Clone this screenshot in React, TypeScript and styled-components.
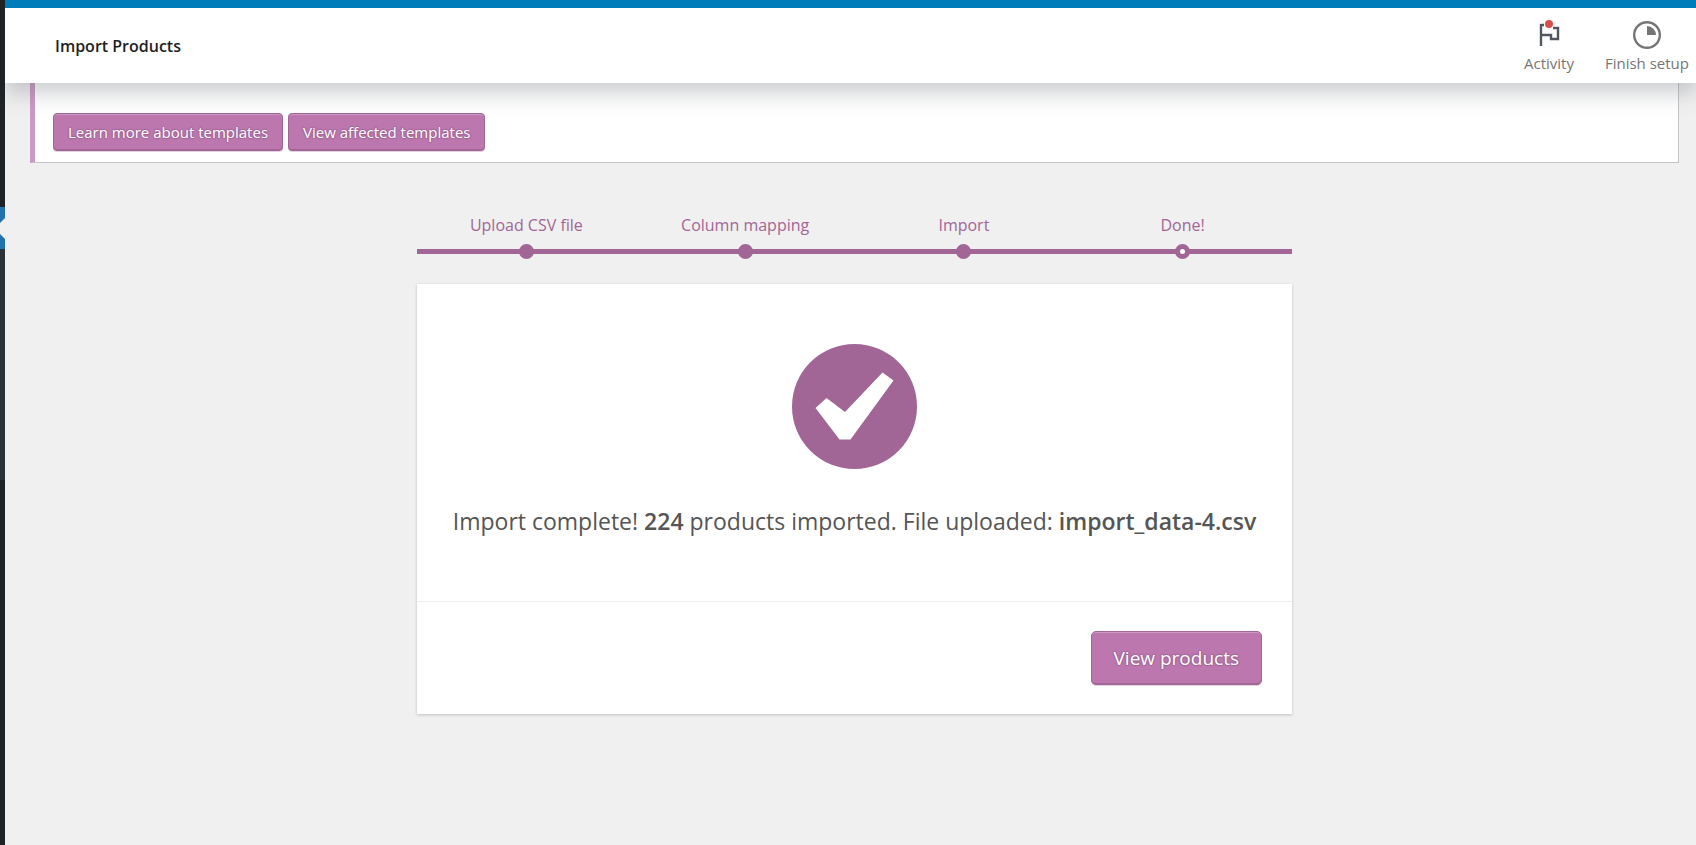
import React from "react";
import styled, { createGlobalStyle, css } from "styled-components";

const plum = "#a16696";

const GlobalStyle = createGlobalStyle`
  * { box-sizing: border-box; }
  body {
    margin: 0;
    background: #f0f0f0;
    color: #3c434a;
    font-family: "Segoe UI", "Open Sans", "Noto Sans", sans-serif;
    font-size: 16px;
    line-height: 24px;
  }
`;

const Page = styled.div`
  display: flex;
  min-height: 100vh;
`;

const MenuRail = styled.nav`
  flex: 0 0 5px;
  display: flex;
  flex-direction: column;
  padding-top: 207px;
  background: #1d2327;
`;

const CurrentItem = styled.div`
  height: 42px;
  background: #2271b1;
  overflow: hidden;
`;

const Submenu = styled.div`
  height: 231px;
  background: #2c3338;
`;

const Main = styled.div`
  flex: 1;
  min-width: 0;
`;

const Header = styled.header`
  position: relative;
  z-index: 1;
  display: flex;
  justify-content: space-between;
  height: 83px;
  border-top: 8px solid #007cba;
  background: #fff;
  box-shadow: 0 10px 20px 0 rgba(85, 93, 102, 0.3);
  clip-path: inset(0 0 -60px 0);
`;

const Title = styled.h1`
  margin: 0;
  padding: 26px 0 0 50px;
  color: #1e1e1e;
  font-size: 16px;
  font-weight: 600;
  line-height: 24px;
`;

const HeaderTabs = styled.div`
  display: flex;
`;

const HeaderTab = styled.button`
  display: flex;
  flex-direction: column;
  align-items: center;
  padding: 10px 7px 0 24px;
  border: 0;
  background: none;
  color: #757575;
  font: inherit;
  font-size: 15px;
  white-space: nowrap;

  svg {
    width: 34px;
    height: 34px;
  }
`;

const TabLabel = styled.span`
  line-height: 22px;
`;

const Content = styled.main`
  padding: 0 17px 0 25px;
`;

const Notice = styled.section`
  display: flex;
  gap: 5px;
  padding: 30px 18px 11px;
  border: 1px solid #c3c4c7;
  border-top: 0;
  border-left: 5px solid #cc99c2;
  background: #fff;
`;

const Button = styled.button<{ $large?: boolean }>`
  height: 38px;
  padding: 0 14px;
  border: 1px solid ${plum};
  border-radius: 4px;
  background: #bb77ae;
  box-shadow: inset 0 1px 0 rgba(255, 255, 255, 0.25), inset 0 -1px 0 ${plum},
    0 1px 0 rgba(161, 102, 150, 0.3);
  color: #fff;
  font: inherit;
  font-size: 15px;
  text-shadow: 0 -1px 1px ${plum}, 1px 0 1px ${plum}, 0 1px 1px ${plum},
    -1px 0 1px ${plum};
  white-space: nowrap;
  ${(p) =>
    p.$large &&
    css`
      height: 54px;
      padding: 0 22px;
      border-radius: 5px;
      font-size: 19px;
    `}
`;

const Wizard = styled.div`
  max-width: 875px;
  margin: 50px auto;
`;

const Steps = styled.ol`
  display: grid;
  grid-template-columns: repeat(4, 1fr);
  margin: 0 0 25px;
  padding: 0;
  background: linear-gradient(${plum}, ${plum}) 0 calc(100% - 5px) / 100% 5px
    no-repeat;
  list-style: none;
`;

const Step = styled.li`
  display: flex;
  flex-direction: column;
  align-items: center;
  gap: 7px;
  color: ${plum};
`;

const Dot = styled.span<{ $current: boolean }>`
  width: 15px;
  height: 15px;
  border: 5px solid ${plum};
  border-radius: 50%;
  background: ${(p) => (p.$current ? "#fff" : plum)};
`;

const Card = styled.section`
  background: #fff;
  box-shadow: 0 1px 3px rgba(0, 0, 0, 0.2);
`;

const Result = styled.div`
  display: flex;
  flex-direction: column;
  align-items: center;
  gap: 34px;
  padding: 60px 30px 61px;
  color: #555;
  font-size: 23px;
  line-height: 37px;
  text-align: center;

  p { margin: 0; }
  strong { font-weight: 600; }
  svg {
    width: 125px;
    height: 125px;
  }
`;

const Actions = styled.div`
  display: flex;
  justify-content: flex-end;
  padding: 29px 30px;
  border-top: 1px solid #eee;
`;

const FlagIcon = () => (
  <svg viewBox="0 0 34 34" fill="none" aria-hidden="true">
    <path
      d="M9 6v22M9 7h3M9 17h10v4h7V10h-5"
      stroke="#50575e"
      strokeWidth="2.4"
    />
    <circle cx="17" cy="6" r="4.7" fill="#fff" />
    <circle cx="17" cy="6" r="4" fill="#d94f4f" />
  </svg>
);

const ProgressIcon = () => (
  <svg viewBox="0 0 34 34" fill="none" aria-hidden="true">
    <circle cx="17" cy="17" r="12.8" stroke="#757575" strokeWidth="2.4" />
    <path d="M17 17V8a9 9 0 0 1 9 9z" fill="#757575" />
  </svg>
);

const CheckIcon = () => (
  <svg viewBox="0 0 125 125" aria-hidden="true">
    <circle cx="62.5" cy="62.5" r="62.5" fill={plum} />
    <path d="M23.5 64 34.5 54 53 68 90.5 28.5 101.5 36.5 58.5 95.5H47.5z" fill="#fff" />
  </svg>
);

const steps = ["Upload CSV file", "Column mapping", "Import", "Done!"];

export default function App() {
  return (
    <>
      <GlobalStyle />
      <Page>
        <MenuRail aria-label="Admin menu">
          <CurrentItem>
            <svg width="5" height="42" aria-hidden="true">
              <path d="M5 11-5.5 21.500 5 32z" fill="#f0f0f0" />
            </svg>
          </CurrentItem>
          <Submenu />
        </MenuRail>
        <Main>
          <Header>
            <Title>Import Products</Title>
            <HeaderTabs>
              <HeaderTab type="button">
                <FlagIcon />
                <TabLabel>Activity</TabLabel>
              </HeaderTab>
              <HeaderTab type="button">
                <ProgressIcon />
                <TabLabel>Finish setup</TabLabel>
              </HeaderTab>
            </HeaderTabs>
          </Header>
          <Content>
            <Notice>
              <Button type="button">Learn more about templates</Button>
              <Button type="button">View affected templates</Button>
            </Notice>
            <Wizard>
              <Steps>
                {steps.map((label, i) => (
                  <Step key={label}>
                    {label}
                    <Dot $current={i === steps.length - 1} />
                  </Step>
                ))}
              </Steps>
              <Card>
                <Result>
                  <CheckIcon />
                  <p>
                    Import complete! <strong>224</strong> products imported. File uploaded:{" "}
                    <strong>import_data-4.csv</strong>
                  </p>
                </Result>
                <Actions>
                  <Button type="button" $large>View products</Button>
                </Actions>
              </Card>
            </Wizard>
          </Content>
        </Main>
      </Page>
    </>
  );
}
